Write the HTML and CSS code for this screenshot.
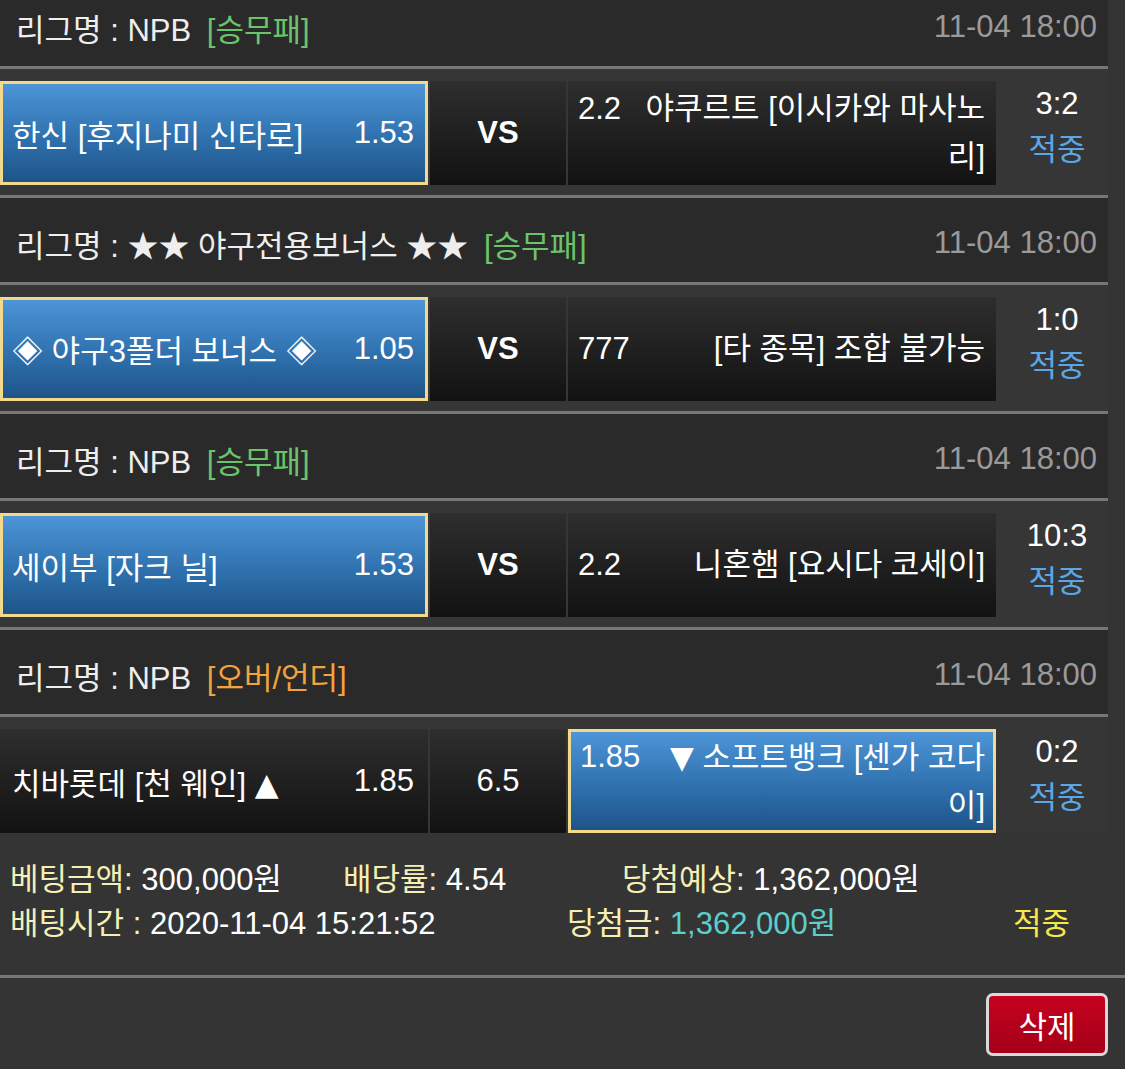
FILE: index.html
```html
<!DOCTYPE html>
<html lang="ko">
<head>
    <meta charset="UTF-8">
    <meta name="viewport" content="width=device-width, initial-scale=1.0">
    <title>베팅내역</title>
    <link rel="stylesheet" href="styles.css">
</head>
<body>
    <div class="slip">

        <div class="game">
            <div class="league">
                <span class="league-name">리그명 : NPB <span class="type type-win">[승무패]</span></span>
                <span class="time">11-04 18:00</span>
            </div>
            <div class="match">
                <div class="pick home selected">
                    <span class="team">한신 [후지나미 신타로]</span>
                    <span class="odds">1.53</span>
                </div>
                <div class="pick mid"><b>VS</b></div>
                <div class="pick away">
                    <div class="away-text"><span class="odds">2.2</span>야쿠르트 [이시카와 마사노리]</div>
                </div>
                <div class="result">
                    <span class="score">3:2</span>
                    <span class="hit">적중</span>
                </div>
            </div>
        </div>

        <div class="game">
            <div class="league">
                <span class="league-name">리그명 : ★★ 야구전용보너스 ★★ <span class="type type-win">[승무패]</span></span>
                <span class="time">11-04 18:00</span>
            </div>
            <div class="match">
                <div class="pick home selected">
                    <span class="team">◈ 야구3폴더 보너스 ◈</span>
                    <span class="odds">1.05</span>
                </div>
                <div class="pick mid"><b>VS</b></div>
                <div class="pick away">
                    <div class="away-text"><span class="odds">777</span>[타 종목] 조합 불가능</div>
                </div>
                <div class="result">
                    <span class="score">1:0</span>
                    <span class="hit">적중</span>
                </div>
            </div>
        </div>

        <div class="game">
            <div class="league">
                <span class="league-name">리그명 : NPB <span class="type type-win">[승무패]</span></span>
                <span class="time">11-04 18:00</span>
            </div>
            <div class="match">
                <div class="pick home selected">
                    <span class="team">세이부 [자크 닐]</span>
                    <span class="odds">1.53</span>
                </div>
                <div class="pick mid"><b>VS</b></div>
                <div class="pick away">
                    <div class="away-text"><span class="odds">2.2</span>니혼햄 [요시다 코세이]</div>
                </div>
                <div class="result">
                    <span class="score">10:3</span>
                    <span class="hit">적중</span>
                </div>
            </div>
        </div>

        <div class="game last">
            <div class="league">
                <span class="league-name">리그명 : NPB <span class="type type-ou">[오버/언더]</span></span>
                <span class="time">11-04 18:00</span>
            </div>
            <div class="match">
                <div class="pick home">
                    <span class="team">치바롯데 [천 웨인] <span class="arrow">▲</span></span>
                    <span class="odds">1.85</span>
                </div>
                <div class="pick mid">6.5</div>
                <div class="pick away selected">
                    <div class="away-text"><span class="odds">1.85</span><span class="arrow">▼</span> 소프트뱅크 [센가 코다이]</div>
                </div>
                <div class="result">
                    <span class="score">0:2</span>
                    <span class="hit">적중</span>
                </div>
            </div>
        </div>

        <div class="bet-info">
            <div class="info-row">
                <span class="col-a"><span class="label">베팅금액:</span> 300,000원</span>
                <span class="col-b"><span class="label">배당률:</span> 4.54</span>
                <span><span class="label">당첨예상:</span> 1,362,000원</span>
            </div>
            <div class="info-row">
                <span class="col-time"><span class="label">배팅시간 :</span> 2020-11-04 15:21:52</span>
                <span class="col-win"><span class="label">당첨금:</span> <span class="win-amount">1,362,000원</span></span>
                <span class="status">적중</span>
            </div>
        </div>

        <div class="actions">
            <button class="delete-button">삭제</button>
        </div>
    </div>
</body>
</html>
```

FILE: styles.css
```css
/* General Styles */
body {
    font-family: 'Liberation Sans', 'Noto Sans CJK KR', sans-serif;
    font-size: 31px;
    background-color: #343434;
    color: #fff;
    margin: 0;
    overflow: hidden;
}

.slip {
    margin-top: -18px;
}

.game {
    width: 1108px;
}

/* League header */
.league {
    display: flex;
    justify-content: space-between;
    align-items: center;
    height: 84px;
    padding: 6px 11px 0 16px;
    box-sizing: border-box;
    background-color: #2a2a2a;
    color: #eee;
}

.type {
    margin-left: 7px;
}

.type-win {
    color: #6cc46a;
}

.type-ou {
    color: #f2a33c;
}

.time {
    color: #9a9a9a;
}

/* Match row */
.match {
    display: flex;
    gap: 2px;
    padding: 12px 0 10px;
    border-top: 3px solid #777;
    border-bottom: 3px solid #777;
    background-color: #363636;
}

.game.last .match {
    border-bottom: none;
    padding-bottom: 0;
}

.pick {
    display: flex;
    align-items: center;
    height: 104px;
    box-sizing: border-box;
    background: linear-gradient(to bottom, #2e2e2e, #121212);
}

.pick.home {
    width: 428px;
    justify-content: space-between;
    padding: 0 14px 0 12px;
}

.pick.mid {
    width: 136px;
    justify-content: center;
}

.pick.away {
    width: 428px;
    padding: 0 11px 0 10px;
}

.pick.selected {
    border: 3px solid #f2d98c;
    background: linear-gradient(to bottom, #4d95d8, #2f71ae 55%, #1e5488);
}

.pick.home.selected {
    padding: 0 11px 0 9px;
}

.pick.away.selected {
    padding: 0 8px 0 9px;
}

.away-text {
    width: 100%;
    text-align: right;
    line-height: 48px;
}

.away-text .odds {
    float: left;
    margin-right: 14px;
}

.arrow {
    font-family: 'DejaVu Sans', sans-serif;
}

.result {
    display: flex;
    flex-direction: column;
    align-items: center;
    flex: 1;
    padding-left: 8px;
    line-height: 46px;
}

.hit {
    color: #5ba7e6;
}

/* Bet summary */
.bet-info {
    padding: 25px 0 29px 10px;
    border-bottom: 3px solid #777;
    line-height: 44px;
}

.info-row {
    display: flex;
}

.label {
    color: #f4efb4;
}

.col-a {
    width: 333px;
}

.col-b {
    width: 279px;
}

.col-time {
    width: 557px;
}

.col-win {
    width: 446px;
}

.win-amount {
    color: #5ccfcc;
}

.status {
    color: #f6e84a;
}

.actions {
    display: flex;
    justify-content: flex-end;
    padding: 15px 17px 0 0;
}

.delete-button {
    width: 122px;
    height: 63px;
    border: 3px solid #d9d9d9;
    border-radius: 7px;
    background: linear-gradient(to bottom, #c5021f, #a50018);
    color: #fff;
    font-family: inherit;
    font-size: 31px;
}
```
